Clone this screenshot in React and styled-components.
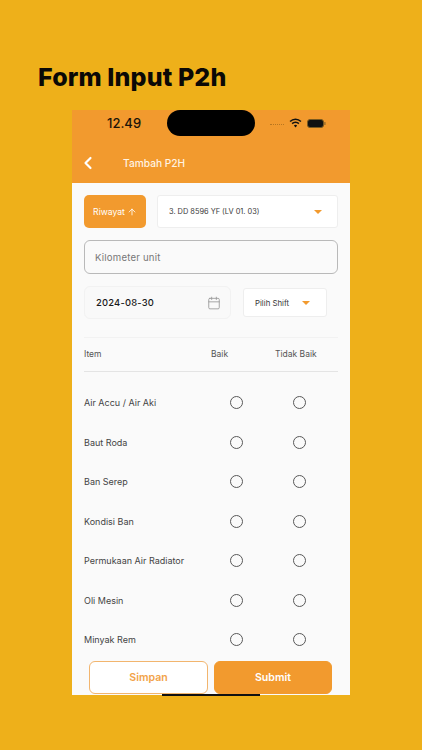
import styled, { createGlobalStyle } from 'styled-components';
import { ChevronLeft, ArrowUp, Calendar } from 'lucide-react';

const GlobalStyle = createGlobalStyle`
  html, body {
    margin: 0;
    padding: 0;
    background: #eeb01a;
  }
  * {
    box-sizing: border-box;
  }
`;

const Page = styled.div`
  width: 422px;
  height: 750px;
  overflow: hidden;
  background: #eeb01a;
  font-family: Inter, "Liberation Sans", sans-serif;
  padding-top: 61px;
`;

const Title = styled.h1`
  margin: 0 0 0 38px;
  height: 49px;
  font-size: 25px;
  line-height: 32px;
  font-weight: 800;
  letter-spacing: 0.12px;
  color: #0b0906;
`;

const Phone = styled.div`
  width: 278px;
  height: 585px;
  margin-left: 72px;
  background: #fafafa;
  display: flex;
  flex-direction: column;
  position: relative;
`;

const Header = styled.div`
  height: 73px;
  flex: none;
  background: #f29a2e;
`;

const StatusBar = styled.div`
  height: 26px;
  display: flex;
  align-items: center;
  position: relative;
  padding-left: 35px;
  font-size: 13px;
  font-weight: 500;
  color: #1c1408;
`;

const Island = styled.div`
  width: 88px;
  height: 26px;
  border-radius: 13px;
  background: #000;
  position: absolute;
  left: 95px;
  top: 0;
`;

const StatusIcons = styled.div`
  margin-left: auto;
  margin-right: 24px;
  display: flex;
  align-items: center;
  gap: 5px;
`;

const Dots = styled.span`
  width: 14px;
  border-top: 1.5px dotted #b8761f;
  margin-top: 3px;
`;

const NavBar = styled.div`
  height: 47px;
  padding: 7px 0 0 6px;
  display: flex;
  align-items: center;
  color: #fff;
`;

const NavTitle = styled.span`
  margin-left: 25px;
  font-size: 10.2px;
  font-weight: 500;
  color: #fff3e2;
`;

const Body = styled.div`
  flex: 1;
  padding: 12px 12px 0;
  display: flex;
  flex-direction: column;
  min-height: 0;
`;

const TopRow = styled.div`
  display: flex;
  gap: 11px;
  height: 33px;
`;

const HistoryButton = styled.button`
  width: 62px;
  border: none;
  border-radius: 5px;
  background: #f29a2e;
  color: #fff;
  font: inherit;
  font-size: 8.6px;
  display: flex;
  align-items: center;
  justify-content: center;
  gap: 2px;
  padding: 0;
`;

const Select = styled.div`
  background: #fff;
  border: 1px solid #eeeeee;
  border-radius: 3px;
  display: flex;
  align-items: center;
  justify-content: space-between;
  color: #3a3a3a;
  font-size: ${(p) => p.$fontSize}px;
  width: ${(p) => p.$width}px;
  height: ${(p) => p.$height}px;
  padding: 0 ${(p) => p.$padRight}px 0 11px;
`;

const Caret = styled.span`
  width: 0;
  height: 0;
  border-left: 4px solid transparent;
  border-right: 4px solid transparent;
  border-top: 4px solid #f29a2e;
`;

const KmInput = styled.div`
  margin-top: 12px;
  height: 34px;
  border: 1px solid #b9b9b9;
  border-radius: 6px;
  display: flex;
  align-items: center;
  padding-left: 10px;
  font-size: 9.6px;
  letter-spacing: 0.2px;
  color: #777;
`;

const DateRow = styled.div`
  margin-top: 12px;
  display: flex;
  align-items: center;
  gap: 12px;
`;

const DateField = styled.div`
  width: 147px;
  height: 33px;
  background: #f9f9f9;
  border: 1px solid #f2f2f2;
  border-radius: 6px;
  display: flex;
  align-items: center;
  justify-content: space-between;
  padding: 0 9px 0 11px;
  font-size: 9.4px;
  font-weight: 500;
  color: #1b1b1b;
  letter-spacing: 0.2px;
`;

const TableHead = styled.div`
  margin-top: 18px;
  height: 35px;
  padding-bottom: 2px;
  border-top: 1px solid #f2f2f2;
  border-bottom: 1px solid #e4e4e4;
  display: grid;
  grid-template-columns: 127px 64px 1fr;
  align-items: center;
  font-size: 8.5px;
  color: #555;
`;

const Rows = styled.div`
  padding-top: 11px;
`;

const Row = styled.div`
  height: 39.5px;
  display: grid;
  grid-template-columns: 120.5px 63.5px 63.5px;
  align-items: center;
  font-size: 9px;
  color: #444;
`;

const Radio = styled.span`
  width: 13px;
  height: 13px;
  border: 1.5px solid #585858;
  border-radius: 50%;
  justify-self: center;
`;

const Footer = styled.div`
  position: absolute;
  left: 17px;
  top: 551px;
  display: flex;
  gap: 6px;
`;

const FooterButton = styled.button`
  width: ${(p) => (p.$solid ? '118px' : '119px')};
  height: 33px;
  border-radius: 6px;
  border: 1px solid ${(p) => (p.$solid ? '#f29a2e' : '#f2b56e')};
  background: ${(p) => (p.$solid ? '#f29a2e' : '#fff')};
  color: ${(p) => (p.$solid ? '#fff' : '#f2a349')};
  font: inherit;
  font-size: 10.6px;
  font-weight: 600;
`;

const HomeBar = styled.div`
  position: absolute;
  left: 90px;
  bottom: -1px;
  width: 98px;
  height: 2px;
  background: #111;
`;

const ITEMS = [
  'Air Accu / Air Aki',
  'Baut Roda',
  'Ban Serep',
  'Kondisi Ban',
  'Permukaan Air Radiator',
  'Oli Mesin',
  'Minyak Rem',
];

function Signal() {
  return (
    <>
      <svg width="13" height="10" viewBox="0 0 12 9">
        <path d="M1 3.2a7 7 0 0 1 10 0M2.9 5.1a4.3 4.3 0 0 1 6.2 0" fill="none" stroke="#111" strokeWidth="1.4" />
        <path d="M6 8.6 4.5 6.9a2.1 2.1 0 0 1 3 0Z" fill="#111" />
      </svg>
      <svg width="19" height="9" viewBox="0 0 19 9">
        <rect x="0.5" y="0.5" width="16" height="8" rx="2.5" fill="#111" stroke="#7a5a20" />
        <rect x="17.3" y="3" width="1.2" height="3" rx="0.6" fill="#8a6428" />
      </svg>
    </>
  );
}

export default function App() {
  return (
    <Page>
      <GlobalStyle />
      <Title>Form Input P2h</Title>
      <Phone>
        <Header>
          <StatusBar>
            12.49
            <Island />
            <StatusIcons>
              <Dots />
              <Signal />
            </StatusIcons>
          </StatusBar>
          <NavBar>
            <ChevronLeft size={20} strokeWidth={2.6} />
            <NavTitle>Tambah P2H</NavTitle>
          </NavBar>
        </Header>
        <Body>
          <TopRow>
            <HistoryButton>
              Riwayat <ArrowUp size={10} />
            </HistoryButton>
            <Select $width={181} $height={33} $fontSize={7.4} $padRight={15}>
              3. DD 8596 YF (LV 01. 03)
              <Caret />
            </Select>
          </TopRow>
          <KmInput>Kilometer unit</KmInput>
          <DateRow>
            <DateField>
              2024-08-30
              <Calendar size={14} color="#999" strokeWidth={1.5} />
            </DateField>
            <Select $width={84} $height={29} $fontSize={7.8} $padRight={16}>
              Pilih Shift
              <Caret />
            </Select>
          </DateRow>
          <TableHead>
            <span>Item</span>
            <span>Baik</span>
            <span>Tidak Baik</span>
          </TableHead>
          <Rows>
            {ITEMS.map((item) => (
              <Row key={item}>
                <span>{item}</span>
                <Radio />
                <Radio />
              </Row>
            ))}
          </Rows>
        </Body>
        <Footer>
          <FooterButton>Simpan</FooterButton>
          <FooterButton $solid>Submit</FooterButton>
        </Footer>
        <HomeBar />
      </Phone>
    </Page>
  );
}
